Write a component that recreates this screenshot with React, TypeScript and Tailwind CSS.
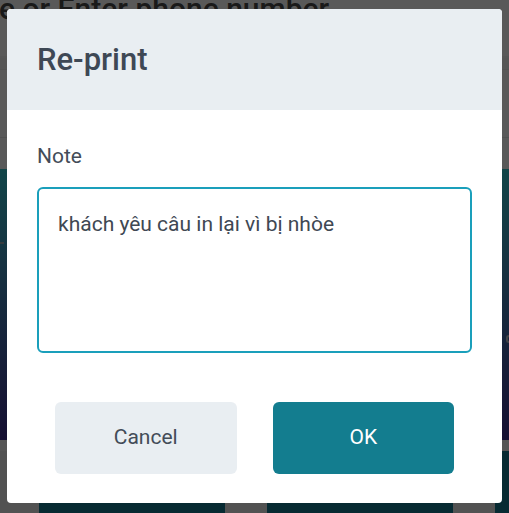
import { useState } from "react";

function Backdrop() {
  // the page behind the modal; the overlay dims it
  return (
    <div className="flex h-[513px] w-[509px] flex-col overflow-hidden bg-white">
      <div className="h-[58px] shrink-0 overflow-hidden border-b-2 border-[#f6f6f6] bg-white">
        <div className="-mt-[9px] ml-[-1px] whitespace-nowrap text-[30px] font-medium leading-[36px] text-[#4a4a4a]">
          e or Enter phone number
        </div>
      </div>
      <div className="h-[12px] shrink-0 border-b border-[#eaeaea] bg-[#f2f2f2]" />
      <div className="h-[68px] shrink-0 border-b border-[#e8e8e8] bg-white" />
      <div className="h-[31px] shrink-0 bg-white" />
      <div className="relative h-[271px] shrink-0 bg-gradient-to-b from-[#31c5cf] to-[#3c2b8f]">
        <span className="absolute left-0 top-[73px] h-[2px] w-[4px] bg-[#9aa9b3]" />
        <span className="absolute right-0 top-[166px] h-[8px] w-[3px] rounded-l-full border-2 border-r-0 border-[#b9c3cc]" />
      </div>
      <div className="h-[11px] shrink-0 bg-[#f4f4f4]" />
      <div className="flex flex-1 gap-[42px] bg-[#ececec] pl-[39px]">
        <div className="w-[186px] shrink-0 bg-[#14798f]" />
        <div className="w-[186px] shrink-0 bg-[#14798f]" />
        <div className="w-[186px] shrink-0 bg-[#14798f]" />
      </div>
    </div>
  );
}

export default function App() {
  const [note, setNote] = useState("khách yêu câu in lại vì bị nhòe");

  return (
    <div className="relative h-[513px] w-[509px] overflow-hidden font-['Roboto','Liberation_Sans',sans-serif]">
      <Backdrop />
      <div className="absolute inset-0 flex items-start justify-center bg-black/65 pt-[9px]">
        <div className="flex h-[494px] w-[495px] flex-col rounded-[4px] bg-white">
          <div className="flex h-[101px] shrink-0 items-center rounded-t-[4px] bg-[#e9eef2] px-[30px] pt-[1px]">
            <h2 className="text-[31px] font-medium leading-[36px] text-[#3e4855]">Re-print</h2>
          </div>
          <div className="flex flex-1 flex-col px-[30px] pt-[34px]">
            <label className="text-[21px] leading-[25px] text-[#434c58]">Note</label>
            <textarea
              value={note}
              onChange={(e) => setNote(e.target.value)}
              className="mt-[18px] h-[166px] w-full resize-none rounded-[6px] border-2 border-[#1a9fbb] px-[19px] pt-[23px] text-[21px] leading-[25px] text-[#404853] outline-none"
            />
            <div className="mt-[49px] flex gap-[36px] px-[18px]">
              <button className="h-[72px] flex-1 rounded-[6px] bg-[#e9eef2] text-[21px] text-[#434c58]">
                Cancel
              </button>
              <button className="h-[72px] flex-1 rounded-[6px] bg-[#137d8f] text-[21px] text-white">
                OK
              </button>
            </div>
          </div>
        </div>
      </div>
    </div>
  );
}
